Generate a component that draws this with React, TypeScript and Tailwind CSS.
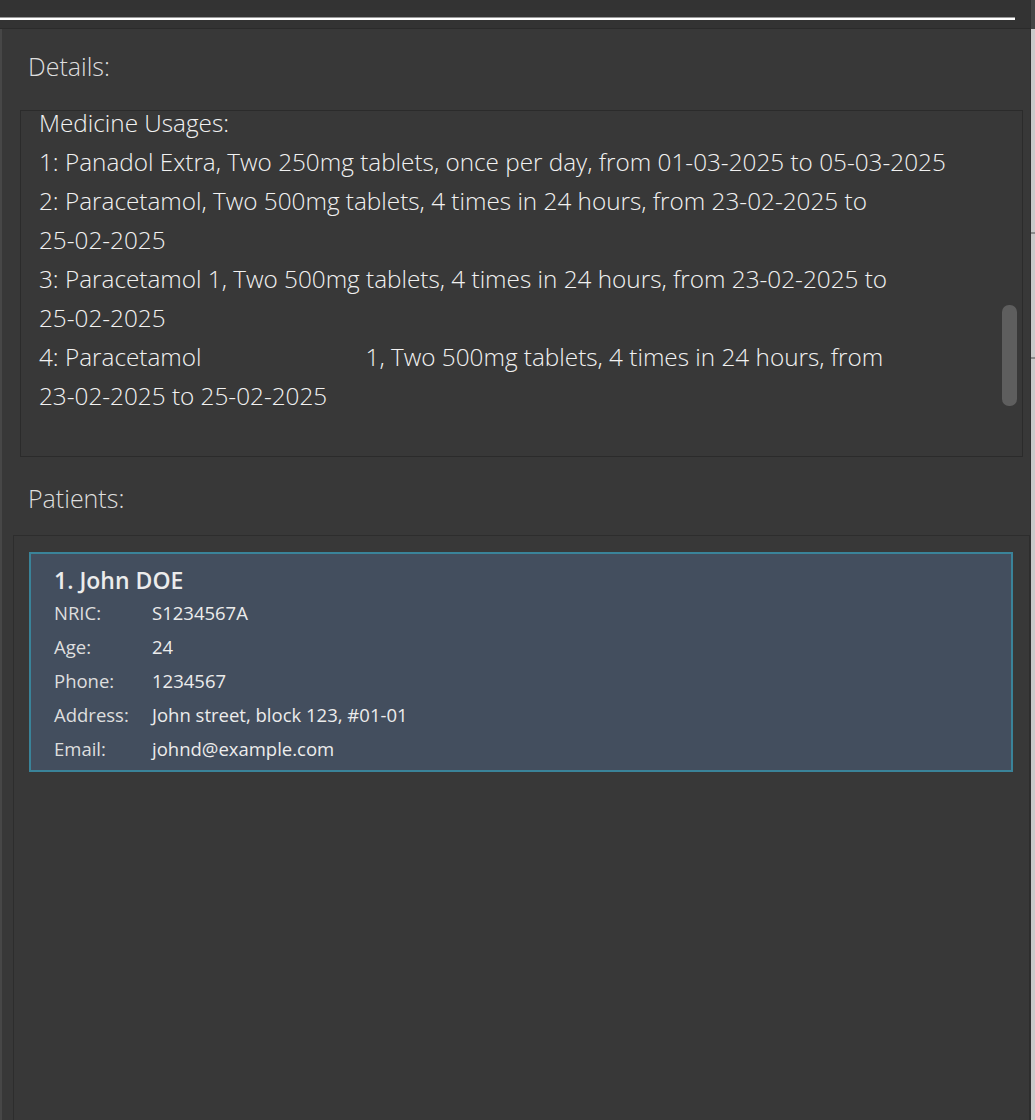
const usages = [
  "1: Panadol Extra, Two 250mg tablets, once per day, from 01-03-2025 to 05-03-2025",
  "2: Paracetamol, Two 500mg tablets, 4 times in 24 hours, from 23-02-2025 to 25-02-2025",
  "3: Paracetamol 1, Two 500mg tablets, 4 times in 24 hours, from 23-02-2025 to 25-02-2025",
  "4: Paracetamol                          1, Two 500mg tablets, 4 times in 24 hours, from 23-02-2025 to 25-02-2025",
];

const fields = [
  { label: "NRIC:", value: "S1234567A" },
  { label: "Age:", value: "24" },
  { label: "Phone:", value: "1234567" },
  { label: "Address:", value: "John street, block 123, #01-01" },
  { label: "Email:", value: "johnd@example.com" },
];

// dates must not break at their hyphens
function UsageLine({ text }: { text: string }) {
  const parts = text.split(/(\S*-\S*)/);
  return (
    <div className="whitespace-pre-wrap">
      {parts.map((p, i) =>
        i % 2 === 1 ? (
          <span key={i} className="whitespace-nowrap">
            {p}
          </span>
        ) : (
          p
        ),
      )}
    </div>
  );
}

function PatientCard() {
  return (
    <div className="w-[984px] border-2 border-[#3a8399] bg-[#434e5e] pb-[4px] pl-[23px] pt-[11px] text-[#ececec]">
      <div className="text-[23px] font-semibold leading-[31px]">1. John DOE</div>
      <div className="flex flex-col">
        {fields.map((f) => (
          <div key={f.label} className="flex h-[34px] items-center text-[18.5px]">
            <span className="w-[98px] text-[#dedede]">{f.label}</span>
            <span>{f.value}</span>
          </div>
        ))}
      </div>
    </div>
  );
}

export default function App() {
  return (
    <div className="flex h-[1120px] w-[1035px] overflow-hidden bg-[#383838] font-['Open_Sans',sans-serif]">
      <div className="flex flex-1 flex-col">
        {/* top strip */}
        <div className="h-[29px] border-b border-[#2b2b2b] bg-[#333333] pt-[17px]">
          <div className="h-[3px] w-[1015px] border-t border-[#9a9a9a] bg-white" />
        </div>

        <div className="flex flex-1">
          <div className="w-[2px] bg-[#474747]" />
          <div className="flex flex-1 flex-col">
            <div className="flex h-[81px] items-center pb-[6px] pl-[26px] text-[25px] font-light text-[#dedede]">
              Details:
            </div>

            <div className="ml-[18px] flex h-[347px] w-[1003px] border border-[#2b2b2b]">
              <div className="flex-1 pl-[18px] pr-[32px] text-[24.3px] font-light leading-[39px] text-[#f2f2f2]">
                <div className="mb-[8px] leading-[23px]">Medicine Usages:</div>
                {usages.map((u) => (
                  <UsageLine key={u} text={u} />
                ))}
              </div>
              <div className="mr-[5px] w-[15px] pt-[194px]">
                <div className="h-[101px] rounded-[7px] bg-[#5e5e5e]" />
              </div>
            </div>

            <div className="flex h-[78px] items-center pl-[26px] pt-[6px] text-[25px] font-light text-[#dedede]">
              Patients:
            </div>

            <div className="ml-[11px] flex-1 border-l border-t border-r border-[#2d2d2d] pl-[15px] pt-[16px]">
              <PatientCard />
            </div>
          </div>
        </div>
      </div>

      {/* right edge */}
      <div className="flex w-[5px] flex-col border-l border-[#2f2f2f]">
        <div className="h-[29px] bg-[#444444]" />
        <div className="h-[203px] bg-[#c9c9c9]" />
        <div className="h-[2px] bg-[#8a8a8a]" />
        <div className="h-[123px] bg-[#c9c9c9]" />
        <div className="h-[2px] bg-[#8a8a8a]" />
        <div className="flex-1 bg-[#c9c9c9]" />
      </div>
    </div>
  );
}
